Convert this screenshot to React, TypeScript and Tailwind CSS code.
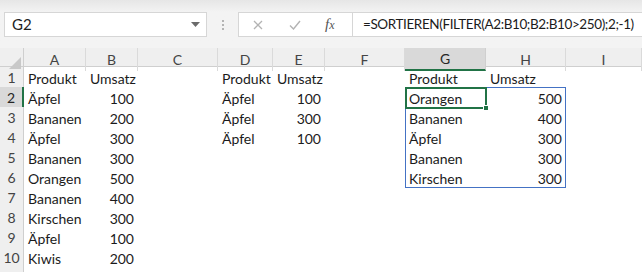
import React from 'react'

const cols = ['A', 'B', 'C', 'D', 'E', 'F', 'G', 'H', 'I']

type Cell = { v: string; num?: boolean }

// sheet content by row, keyed by column letter
const data: Record<number, Record<string, Cell>> = {
  1: {
    A: { v: 'Produkt' }, B: { v: 'Umsatz' },
    D: { v: 'Produkt' }, E: { v: 'Umsatz' },
    G: { v: 'Produkt' }, H: { v: 'Umsatz' },
  },
  2: { A: { v: 'Äpfel' }, B: { v: '100', num: true }, D: { v: 'Äpfel' }, E: { v: '100', num: true }, G: { v: 'Orangen' }, H: { v: '500', num: true } },
  3: { A: { v: 'Bananen' }, B: { v: '200', num: true }, D: { v: 'Äpfel' }, E: { v: '300', num: true }, G: { v: 'Bananen' }, H: { v: '400', num: true } },
  4: { A: { v: 'Äpfel' }, B: { v: '300', num: true }, D: { v: 'Äpfel' }, E: { v: '100', num: true }, G: { v: 'Äpfel' }, H: { v: '300', num: true } },
  5: { A: { v: 'Bananen' }, B: { v: '300', num: true }, G: { v: 'Bananen' }, H: { v: '300', num: true } },
  6: { A: { v: 'Orangen' }, B: { v: '500', num: true }, G: { v: 'Kirschen' }, H: { v: '300', num: true } },
  7: { A: { v: 'Bananen' }, B: { v: '400', num: true } },
  8: { A: { v: 'Kirschen' }, B: { v: '300', num: true } },
  9: { A: { v: 'Äpfel' }, B: { v: '100', num: true } },
  10: { A: { v: 'Kiwis' }, B: { v: '200', num: true } },
}

const gridCols = 'grid-cols-[24px_62px_52px_80px_55px_52px_80px_81px_80px_1fr]'

export default function App() {
  return (
    <div className="w-[642px] h-[272px] overflow-hidden bg-white font-['Lato',sans-serif] text-[#1b1b1b]">
      {/* formula bar */}
      <div className="h-[48px] bg-[#f3f3f3] bg-gradient-to-b from-[#e6e6e6] to-[#f3f3f3] to-[12px] flex items-start pt-[12px] pl-[4px]">
        <div className="shrink-0 w-[203px] h-[25px] bg-white border border-[#d6d6d6] flex items-center pl-[7px] pr-[6px]">
          <span className="flex-1 text-[15px] text-[#222]">G2</span>
          <svg width="9" height="5" viewBox="0 0 9 5"><path d="M0 0h9L4.5 5z" fill="#6b6b6b" /></svg>
        </div>
        <div className="shrink-0 w-[31px] h-[25px] flex flex-col items-center justify-center gap-[2px]">
          <span className="w-[2px] h-[2px] bg-[#b4b4b4]" />
          <span className="w-[2px] h-[2px] bg-[#b4b4b4]" />
          <span className="w-[2px] h-[2px] bg-[#b4b4b4]" />
        </div>
        <div className="flex-1 min-w-0 overflow-hidden h-[25px] bg-white border border-[#d6d6d6] border-r-0 flex items-center">
          <div className="shrink-0 w-[114px] h-full flex items-center border-r border-[#d6d6d6]">
            <svg className="ml-[14px]" width="10" height="10" viewBox="0 0 10 10">
              <path d="M1 1l8 8M9 1l-8 8" stroke="#b3b3b3" strokeWidth="1.3" />
            </svg>
            <svg className="ml-[26px]" width="12" height="10" viewBox="0 0 12 10">
              <path d="M1 5.5l3.5 3.5L11 1" fill="none" stroke="#b3b3b3" strokeWidth="1.4" />
            </svg>
            <span className="ml-[24px] font-['Liberation_Serif',serif] italic text-[15px] text-[#555] leading-none">
              f<span className="text-[12px]">x</span>
            </span>
          </div>
          <span className="pl-[10px] text-[13.5px] tracking-[-0.4px] text-[#1b1b1b] whitespace-nowrap">
            =SORTIEREN(FILTER(A2:B10;B2:B10&gt;250);2;-1)
          </span>
        </div>
      </div>

      {/* sheet */}
      <div className="relative">
        <div className={`grid ${gridCols} h-[19px] bg-[#efefef] border-b border-[#cfcfcf]`}>
          <div className="relative border-r border-[#cfcfcf]">
            <svg className="absolute right-[2px] bottom-[2px]" width="12" height="12" viewBox="0 0 12 12">
              <path d="M12 0v12H0z" fill="#c8c8c8" />
            </svg>
          </div>
          {cols.map((c) => (
            <div
              key={c}
              className={
                c === 'G'
                  ? 'flex items-center justify-center text-[14px] text-[#262626] bg-[#d9d9d9] border-r border-[#cfcfcf] border-b-2 border-b-[#217346]'
                  : 'flex items-center justify-center text-[14px] text-[#444] border-r border-[#dadada]'
              }
            >
              {c}
            </div>
          ))}
          <div />
        </div>

        {Object.keys(data).map((k) => {
          const r = Number(k)
          const row = data[r]
          return (
            <div key={r} className={`grid ${gridCols} h-[20px]`}>
              <div
                className={
                  r === 2
                    ? 'flex items-center justify-center text-[14px] text-[#262626] bg-[#d9d9d9] border-b border-[#cfcfcf] border-r-2 border-r-[#217346]'
                    : 'flex items-center justify-center text-[14px] text-[#444] bg-[#efefef] border-b border-[#d6d6d6] border-r border-r-[#cfcfcf]'
                }
              >
                {r}
              </div>
              {cols.map((c) => {
                const cell = row[c]
                return (
                  <div
                    key={c}
                    className={`flex items-center px-[4px] text-[14px] whitespace-nowrap ${cell?.num ? 'justify-end' : ''}`}
                  >
                    {cell?.v}
                  </div>
                )
              })}
              <div />
            </div>
          )
        })}
        {/* row 11, only its top edge is in view */}
        <div className={`grid ${gridCols} h-[20px]`}>
          <div className="bg-[#efefef] border-r border-[#cfcfcf]" />
        </div>

        {/* spill range G2:H6 */}
        <div className="absolute left-[405px] top-[39px] w-[161px] h-[101px] border border-[#4472c4] pointer-events-none" />
        {/* active cell G2 */}
        <div className="absolute left-[405px] top-[39px] w-[82px] h-[22px] border-2 border-[#217346] pointer-events-none" />
        <div className="absolute left-[483px] top-[57px] w-[6px] h-[6px] bg-[#217346] border border-white" />
      </div>
    </div>
  )
}
